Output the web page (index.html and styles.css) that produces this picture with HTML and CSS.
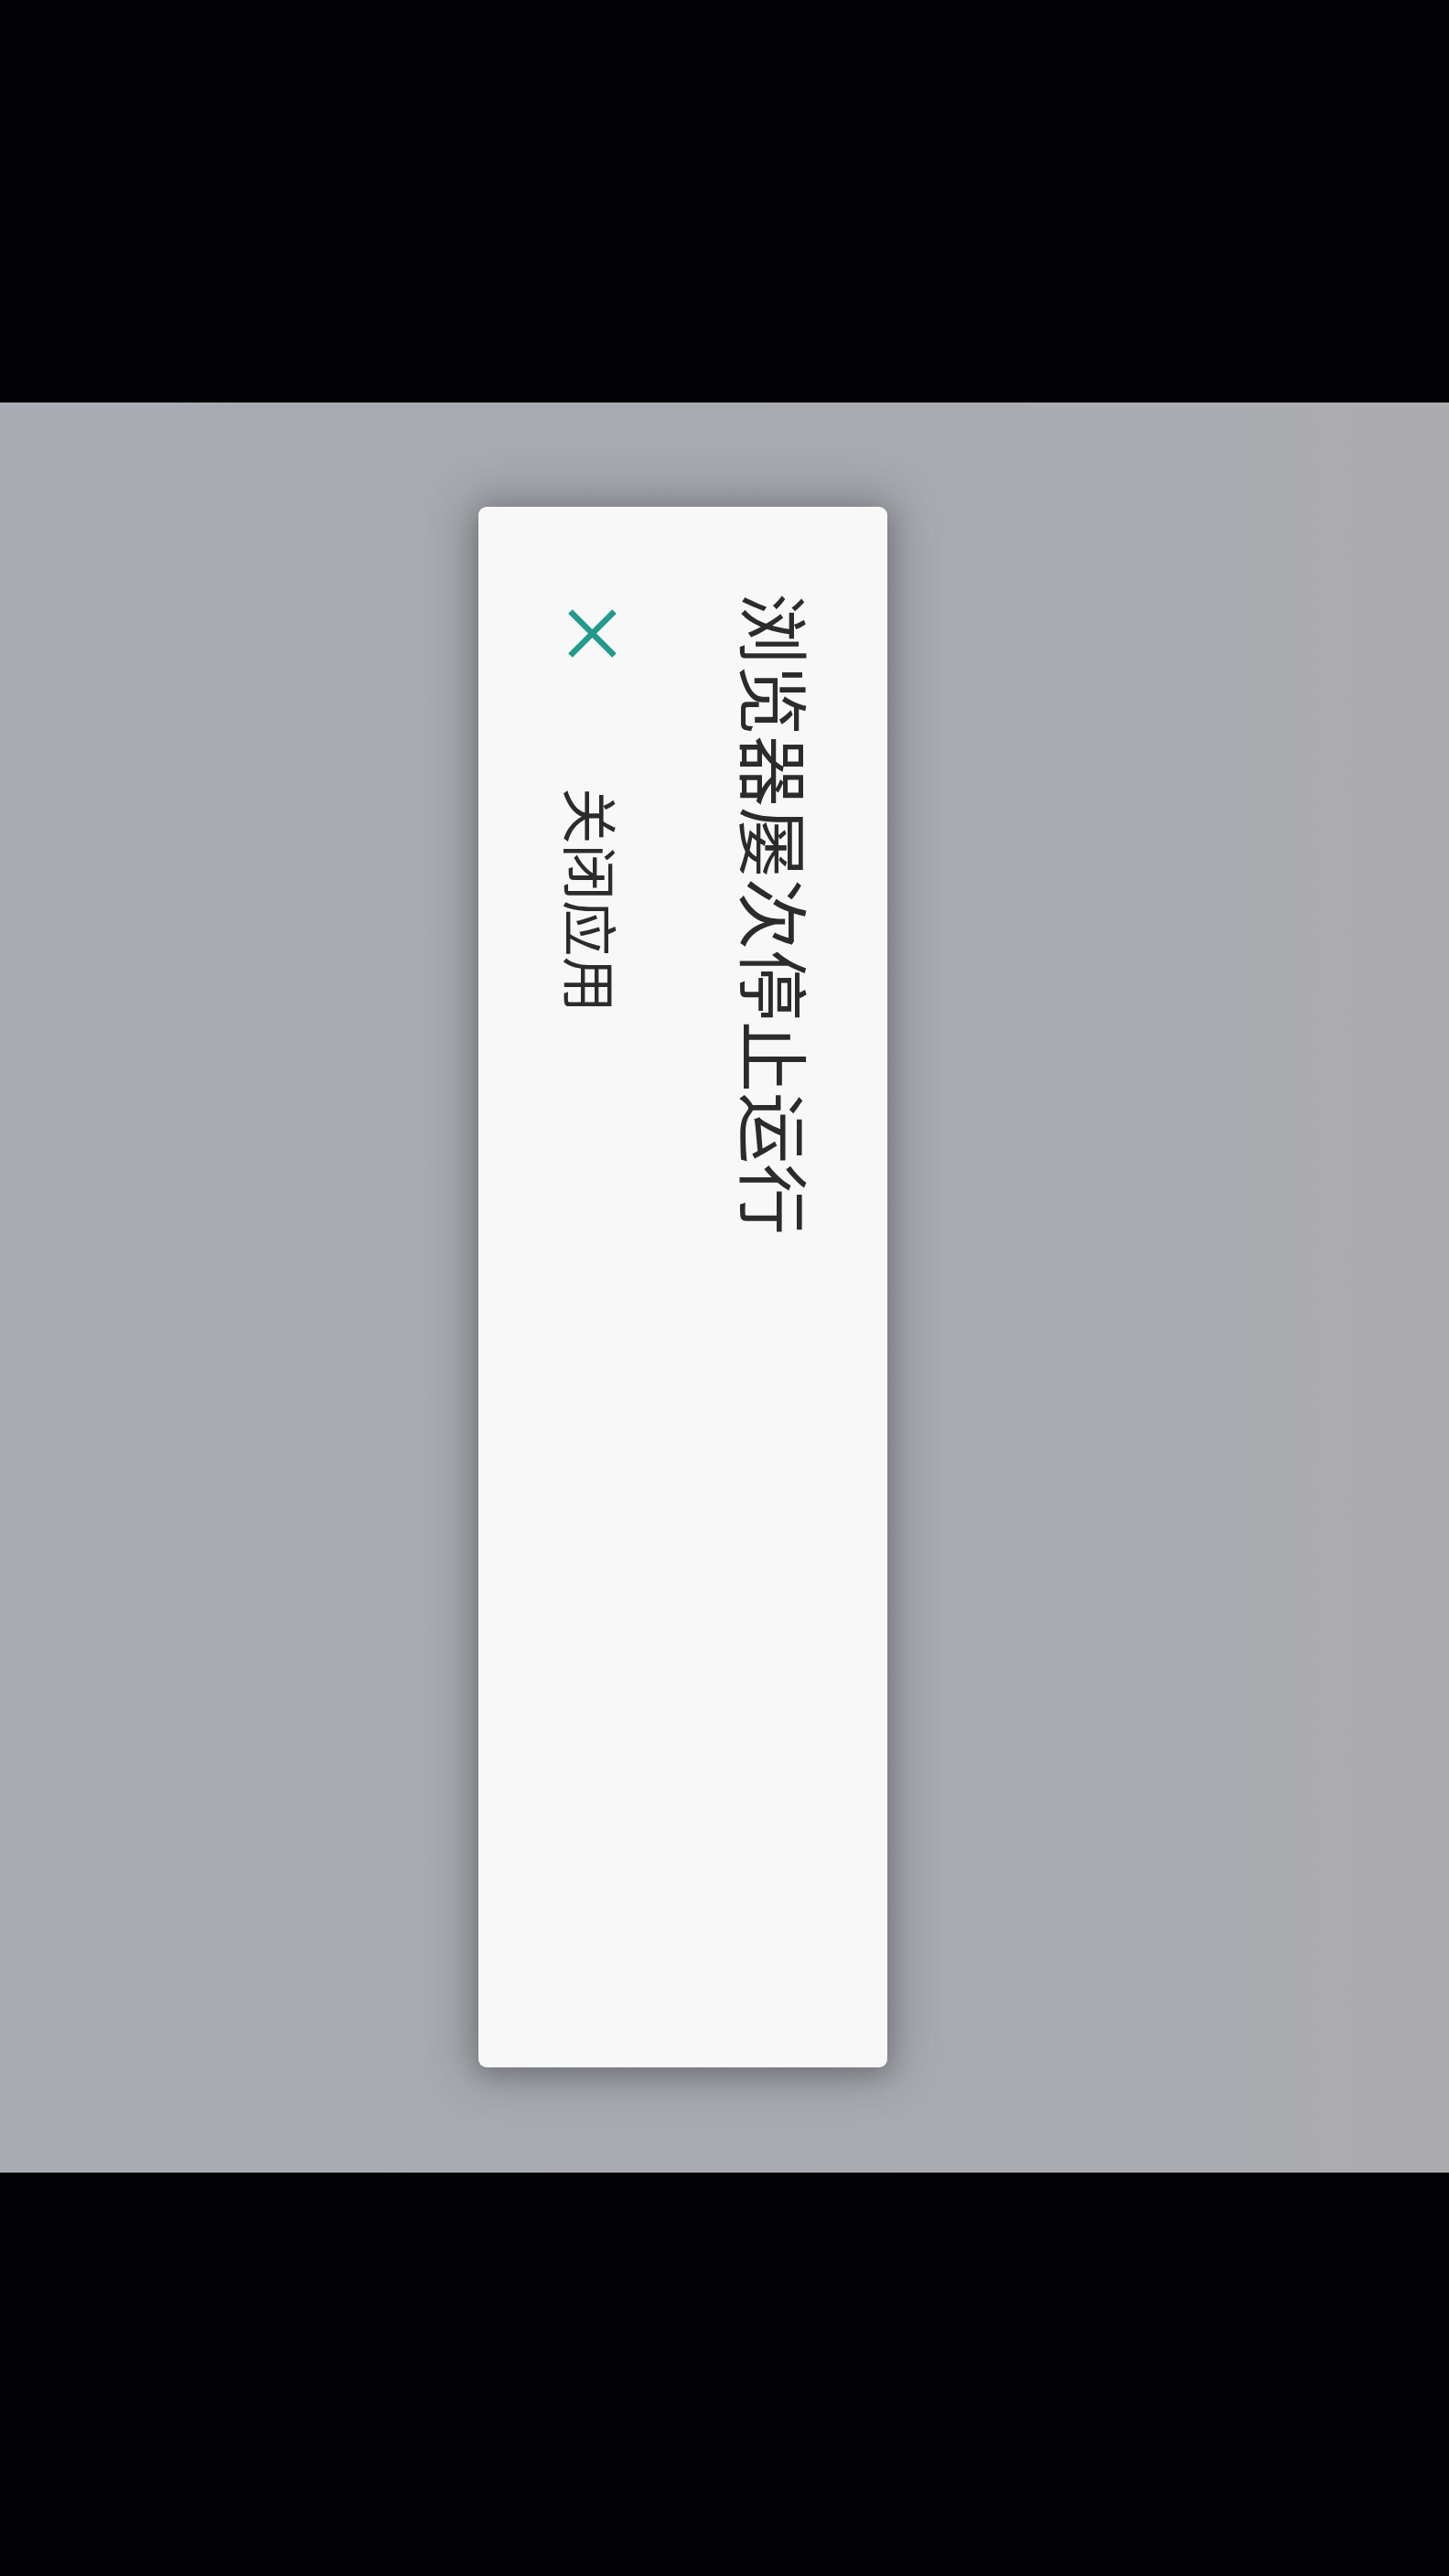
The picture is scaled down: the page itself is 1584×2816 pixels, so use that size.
FILE: index.html
```html
<!DOCTYPE html>
<html lang="zh-CN">
<head>
<meta charset="utf-8">
<title>浏览器屡次停止运行</title>
<link rel="stylesheet" href="styles.css">
</head>
<body>
  <div class="bar bar-top"></div>
  <main class="scrim">
    <div class="dialog">
      <h1 class="title">浏览器屡次停止运行</h1>
      <div class="action">
        <svg class="icon-x" width="53" height="53" viewBox="0 0 53 53" aria-hidden="true">
          <path d="M2.5 2.5 L50.5 50.5 M50.5 2.5 L2.5 50.5" stroke="#229a8c" stroke-width="6.5" fill="none" stroke-linecap="butt"/>
        </svg>
        <span class="label">关闭应用</span>
      </div>
    </div>
  </main>
  <div class="bar bar-bottom"></div>
</body>
</html>
```

FILE: styles.css
```css
html, body {
  margin: 0;
  padding: 0;
  background: #000;
}

body {
  width: 1584px;
  height: 2816px;
  overflow: hidden;
  font-family: "Noto Sans CJK SC", "Noto Sans", sans-serif;
}

.bar {
  background: #020204;
}

.bar-top {
  height: 440px;
}

.bar-bottom {
  height: 441px;
}

.scrim {
  height: 1935px;
  box-sizing: border-box;
  padding-top: 114px;
  padding-left: 523px;
  background:
    linear-gradient(90deg, #a9acb3 0%, #a8abb1 30%, #a9abb1 60%, #aaacb2 80%, #acacaf 100%);
}

.dialog {
  writing-mode: vertical-rl;
  text-orientation: sideways;
  width: 447px;
  height: 1706px;
  box-sizing: border-box;
  padding-top: 94px;
  padding-right: 82px;
  background: #f8f8f8;
  border-radius: 9px;
  box-shadow: 0 0 50px 10px rgba(60, 62, 66, 0.38), 0 8px 24px rgba(0, 0, 0, 0.18);
}

.title {
  margin: 0;
  font-size: 78px;
  line-height: 78px;
  font-weight: 400;
  color: #2b2b2b;
}

.action {
  display: flex;
  align-items: center;
  margin-block-start: 132px;
  padding-inline-start: 18px;
}

.icon-x {
  display: block;
  flex: none;
}

.label {
  margin-inline-start: 142px;
  font-size: 61.5px;
  line-height: 61.5px;
  color: #2b2b2b;
}
```
